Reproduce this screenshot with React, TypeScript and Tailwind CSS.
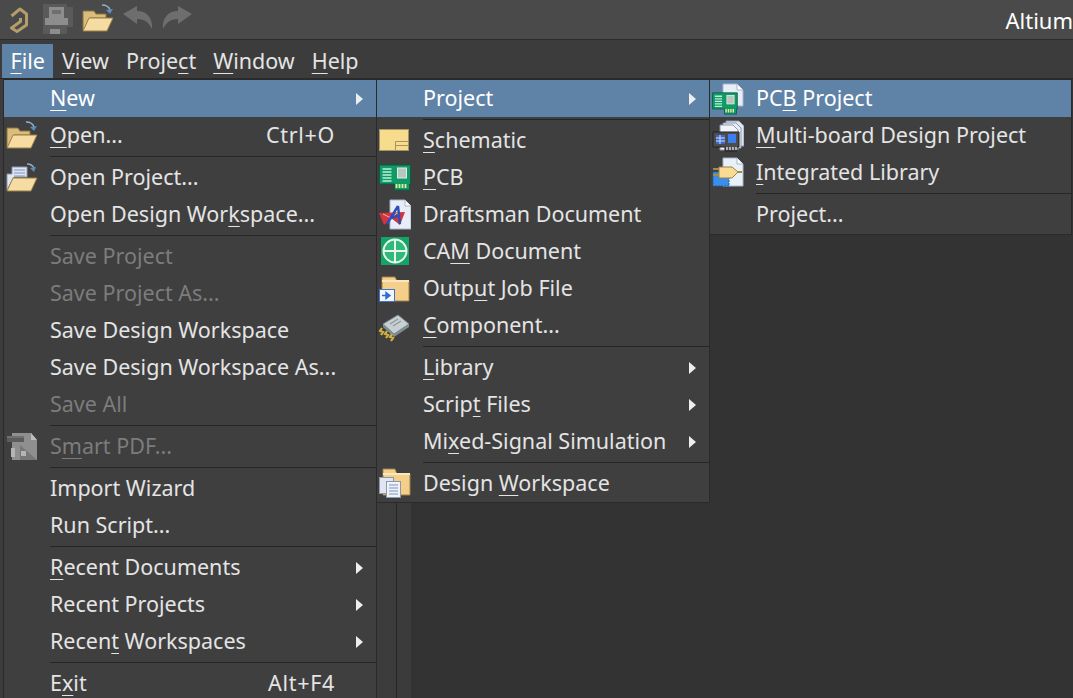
import type { ReactNode } from "react";

const Caption = ({ text }: { text: string }) => {
    // "&" marks the mnemonic letter, same as a native menu label
    const i = text.indexOf("&");
    if (i < 0) return <>{text}</>;
    return (
        <>
            {text.slice(0, i)}
            <span className="underline decoration-1 underline-offset-[4px]">{text[i + 1]}</span>
            {text.slice(i + 2)}
        </>
    );
};

const OpenFolder = () => (
    <svg width="32" height="32" viewBox="0 0 32 32">
        <path d="M1 27V8h11l2 3h10v4H8L3 27z" fill="#dcbc7c" stroke="#8b7440" strokeWidth="1" />
        <path d="M1 28l6-13h24l-6 13z" fill="#f6dca2" stroke="#9a7f45" strokeWidth="1" />
        <path d="M20 2c4 0 7 2 8 5" fill="none" stroke="#8fb0cc" strokeWidth="1.5" />
        <path d="M24 7l7-1-3 5z" fill="#5c8cb8" />
    </svg>
);

const OpenProjectIcon = () => (
    <svg width="32" height="32" viewBox="0 0 32 32">
        <path d="M1 28V12h5V5h15v10H8z" fill="#dfe6f2" stroke="#8d98ad" strokeWidth="1" />
        <path d="M8 8h11M8 11h11M8 14h11" stroke="#7f93bd" strokeWidth="1" />
        <path d="M1 29l6-13h24l-6 13z" fill="#f6dca2" stroke="#9a7f45" strokeWidth="1" />
        <path d="M21 2c4 0 6 2 7 4" fill="none" stroke="#8fb0cc" strokeWidth="1.5" />
        <path d="M24 6l6-1-2 5z" fill="#5c8cb8" />
    </svg>
);

const SmartPdf = () => (
    <svg width="32" height="32" viewBox="0 0 32 32">
        <path d="M6 2h19l6 7v20H6z" fill="#8f8f8f" />
        <path d="M25 2l6 7h-6z" fill="#bdbdbd" />
        <path d="M14 14l17 15H14z" fill="#777" />
        <path d="M1 5h17v6H1z" fill="#5c5c5c" />
        <path d="M1 5h17v2H1z" fill="#707070" />
        <path d="M5 17h4v9H5zM15 20h5v5h-5z" fill="#b5b5b5" />
    </svg>
);

const SchematicIcon = () => (
    <svg width="32" height="32" viewBox="0 0 32 32">
        <rect x="0.5" y="4.5" width="29" height="21" fill="#f7dc8e" stroke="#a59361" />
        <path d="M16.5 25V16.5H29.5M16.5 20.5H29.5" fill="none" stroke="#a59361" />
    </svg>
);

const PcbBoard = ({ x = 0, y = 0 }: { x?: number; y?: number }) => (
    <g transform={`translate(${x} ${y})`}>
        <path d="M0 1h31v19h-1v6H15v-6H0z" fill="#0f9a68" stroke="#0b5c40" strokeWidth="1" />
        <path d="M3 5h9M3 8h9M3 11h9M3 14h9M3 17h9" stroke="#bff0d8" strokeWidth="1.5" />
        <rect x="18" y="4" width="9" height="10" fill="#b7c6bf" stroke="#e3ebe6" />
        <path d="M17 20v4M20 20v4M23 20v4M26 20v4" stroke="#e6ec9a" strokeWidth="1.8" />
    </g>
);

const PcbIcon = () => (
    <svg width="32" height="32" viewBox="0 0 32 32">
        <PcbBoard x={0.5} y={2} />
    </svg>
);

const DraftsmanIcon = () => (
    <svg width="32" height="32" viewBox="0 0 32 32">
        <path d="M11 1h15l6 6v23H11z" fill="#e8eef8" stroke="#a9b4c8" />
        <path d="M26 1v6h6" fill="#fff" stroke="#a9b4c8" />
        <path d="M0 14l26-1-5 13-9-7-7 7z" fill="#d4333f" />
        <path d="M4 15l8 4 6-5 3 5" fill="none" stroke="#f0b0b0" strokeWidth="1" />
        <path d="M19 7L8 25M19 7l2 18M12 19l9-3" fill="none" stroke="#2b4fb8" strokeWidth="2.4" />
    </svg>
);

const CamIcon = () => (
    <svg width="32" height="32" viewBox="0 0 32 32">
        <rect x="2" y="1" width="28" height="28" fill="#14a566" />
        <circle cx="16" cy="15" r="11.5" fill="#2fb97b" stroke="#e8f6ee" strokeWidth="2" />
        <path d="M16 3v24M4 15h24" stroke="#e8f6ee" strokeWidth="2" />
    </svg>
);

const OutputIcon = () => (
    <svg width="32" height="32" viewBox="0 0 32 32">
        <path d="M3 26V4h13l2 4h12v20H3z" fill="#f5cf8a" stroke="#9d8149" />
        <path d="M3 8h27" stroke="#fbe7bd" strokeWidth="2" />
        <rect x="0.5" y="16.5" width="15" height="12" fill="#f3f6fc" stroke="#3a74cf" />
        <path d="M3 22.5h6M7 19.5l4 3-4 3z" fill="#2d6cd0" stroke="#2d6cd0" strokeWidth="1.4" />
    </svg>
);

const ComponentIcon = () => (
    <svg width="32" height="32" viewBox="0 0 32 32">
        <path d="M4 14L19 5l11 9-15 10z" fill="#c7cfd2" stroke="#7c8a8d" />
        <path d="M4 14v3l11 10 15-10v-3L15 24z" fill="#7f8e92" />
        <path d="M11 14l8-5M14 16l8-5" stroke="#8e9a9d" strokeWidth="1.4" />
        <path d="M3 18l-2 3 3 1-2 3M8 21l-2 3 3 1-2 3M13 24l-2 3 3 1-2 3" fill="none" stroke="#d6b23c" strokeWidth="2.2" />
    </svg>
);

const WorkspaceIcon = () => (
    <svg width="32" height="32" viewBox="0 0 32 32">
        <path d="M4 24V1h12l2 5h13v21H4z" fill="#f5cf8a" stroke="#9d8149" />
        <path d="M4 6h27" stroke="#fbe7bd" strokeWidth="2" />
        <rect x="0.5" y="9.5" width="14" height="16" fill="#dfe6f2" stroke="#8d98ad" />
        <rect x="7.5" y="13.5" width="14" height="16" fill="#eef2fa" stroke="#8d98ad" />
        <path d="M10 17h9M10 20h9M10 23h9M10 26h9" stroke="#7f93bd" />
    </svg>
);

const PageBack = () => (
    <>
        <path d="M11 1h14l6 6v16H11z" fill="#e8eef8" stroke="#a9b4c8" />
        <path d="M25 1v6h6" fill="#fff" stroke="#a9b4c8" />
    </>
);

const PcbProjectIcon = () => (
    <svg width="32" height="32" viewBox="0 0 32 32">
        <PageBack />
        <g transform="translate(0.5 9) scale(0.8 0.85)">
            <PcbBoard />
        </g>
    </svg>
);

const MultiBoardIcon = () => (
    <svg width="32" height="32" viewBox="0 0 32 32">
        <path d="M14 1h13l5 5v20H14z" fill="#dfe6f2" stroke="#8d98ad" />
        <path d="M11 3h13l5 5v20H11z" fill="#e8eef8" stroke="#8d98ad" />
        <path d="M8 5h13l5 5v20H8z" fill="#f0f4fb" stroke="#8d98ad" />
        <path d="M1 12h26v15h-2v4H13v-4H1z" fill="#4c4c4c" stroke="#222" />
        <path d="M4 15h9v9H4z" fill="#3f68c8" />
        <path d="M4 18h9M4 21h9M8 15v9" stroke="#cfe0ff" />
        <rect x="16" y="14" width="8" height="9" fill="#3c7df0" />
        <path d="M15 27v3M18 27v3M21 27v3M24 27v3" stroke="#ddd" strokeWidth="1.4" />
    </svg>
);

const LibraryIcon = () => (
    <svg width="32" height="32" viewBox="0 0 32 32">
        <path d="M11 1h14l6 6v22H11z" fill="#e8f0f8" stroke="#a9b4c8" />
        <path d="M25 1v6h6" fill="#fff" stroke="#a9b4c8" />
        <rect x="1" y="15" width="16" height="14" fill="#3b8fe8" stroke="#1f5fb0" strokeDasharray="2 1" />
        <path d="M7 10h13l6 5-6 6H7z" fill="#f8dc95" stroke="#9d8149" />
        <path d="M1 12h6M1 18h6M26 15h4" stroke="#a78c3b" strokeWidth="2" />
    </svg>
);

type Row =
    | { sep: true }
    | {
          sep?: false;
          label: string;
          icon?: ReactNode;
          keys?: string;
          more?: boolean;
          off?: boolean;
          hot?: boolean;
      };

const fileRows: Row[] = [
    { label: "&New", more: true, hot: true },
    { label: "&Open...", icon: <OpenFolder />, keys: "Ctrl+O" },
    { sep: true },
    { label: "Open Project...", icon: <OpenProjectIcon /> },
    { label: "Open Design Wor&kspace..." },
    { sep: true },
    { label: "Save Project", off: true },
    { label: "Save Project As...", off: true },
    { label: "Save Design Workspace" },
    { label: "Save Design Workspace As..." },
    { label: "Save All", off: true },
    { sep: true },
    { label: "S&mart PDF...", icon: <SmartPdf />, off: true },
    { sep: true },
    { label: "Import Wizard" },
    { label: "Run Script..." },
    { sep: true },
    { label: "&Recent Documents", more: true },
    { label: "Recent Projects", more: true },
    { label: "Recen&t Workspaces", more: true },
    { sep: true },
    { label: "E&xit", keys: "Alt+F4" },
];

const newRows: Row[] = [
    { label: "Project", more: true, hot: true },
    { sep: true },
    { label: "&Schematic", icon: <SchematicIcon /> },
    { label: "&PCB", icon: <PcbIcon /> },
    { label: "Draftsman Document", icon: <DraftsmanIcon /> },
    { label: "CA&M Document", icon: <CamIcon /> },
    { label: "Outp&ut Job File", icon: <OutputIcon /> },
    { label: "&Component...", icon: <ComponentIcon /> },
    { sep: true },
    { label: "&Library", more: true },
    { label: "Scrip&t Files", more: true },
    { label: "Mi&xed-Signal Simulation", more: true },
    { sep: true },
    { label: "Design &Workspace", icon: <WorkspaceIcon /> },
];

const projectRows: Row[] = [
    { label: "PC&B Project", icon: <PcbProjectIcon />, hot: true },
    { label: "&Multi-board Design Project", icon: <MultiBoardIcon /> },
    { label: "&Integrated Library", icon: <LibraryIcon /> },
    { sep: true },
    { label: "Project..." },
];

const Menu = ({ rows, className }: { rows: Row[]; className: string }) => (
    <div className={`absolute flex flex-col bg-[#3f3f3f] border border-[#2a2a2a] ${className}`}>
        {rows.map((row, i) =>
            row.sep ? (
                <div key={i} className="h-[5px] flex items-center pl-[46px]">
                    <div className="h-px w-full bg-[#262626]" />
                </div>
            ) : (
                <div
                    key={i}
                    className={`h-[37px] shrink-0 flex items-center ${row.hot ? "bg-[#5f83a7] text-white" : ""} ${
                        row.off ? "text-[#7c7c7c]" : ""
                    }`}
                >
                    <div className="w-[46px] shrink-0 pl-[2px] flex items-center">{row.icon}</div>
                    <span className="flex-1 whitespace-nowrap pb-[2px]">
                        <Caption text={row.label} />
                    </span>
                    {row.keys && <span className="mr-[41px] pb-[2px] tracking-[0.7px]">{row.keys}</span>}
                    {row.more && (
                        <svg width="7" height="12" viewBox="0 0 7 12" className="mr-[13px]">
                            <path d="M0 0l7 6-7 6z" fill="#eeeeee" />
                        </svg>
                    )}
                </div>
            ),
        )}
    </div>
);

const Toolbar = () => (
    <div className="h-10 shrink-0 flex items-center bg-[#4a4a4a] border-b border-[#2c2c2c] pl-[10px]">
        <svg width="18" height="26" viewBox="0 0 18 26" className="mr-[15px]">
            <path d="M1.5 9L10 2l6.5 5v11L7 24.5 1.5 21l9-6.5V11" fill="none" stroke="#b39d68" strokeWidth="3" strokeLinejoin="round" />
        </svg>
        <svg width="30" height="30" viewBox="0 0 30 30" className="mr-[9px] mb-[2px]">
            <path d="M0 0h24v3h6v20h-6v7H0z" fill="#5a5a5a" />
            <path d="M6 3h15v11H6zM2 14h23v7H2zM7 25h10v5H7z" fill="#8d8d8d" />
            <path d="M9 6h9v4H9z" fill="#6f6f6f" />
        </svg>
        <div className="mr-[9px] mb-[2px]">
            <OpenFolder />
        </div>
        <svg width="30" height="23" viewBox="0 0 30 23" className="mr-[9px] mb-[4px]">
            <path d="M0 8L14 0v5c10 0 16 7 15 18-3-6-7-10-15-10v5z" fill="#6e6e6e" />
        </svg>
        <svg width="30" height="23" viewBox="0 0 30 23" className="mb-[4px]">
            <path d="M30 8L16 0v5C6 5 0 12 1 23c3-6 7-10 15-10v5z" fill="#6e6e6e" />
        </svg>
        <span className="ml-auto text-[22px] text-white whitespace-nowrap">Altium</span>
    </div>
);

const MenuBar = () => (
    <div className="h-[39px] shrink-0 flex items-end bg-[#3c3c3c] pl-[2px] border-b border-[#2a2a2a]">
        {["&File", "&View", "Proje&ct", "&Window", "&Help"].map((m, i) => (
            <div key={m} className={`h-[34px] flex items-center px-[8.5px] ${i === 0 ? "bg-[#5f83a7] text-white" : ""}`}>
                <Caption text={m} />
            </div>
        ))}
    </div>
);

export default function App() {
    return (
        <div
            className="relative h-[698px] w-[1073px] overflow-hidden flex flex-col bg-[#333333] text-[21.5px] leading-none text-[#e4e4e4]"
            style={{ fontFamily: '"Noto Sans", sans-serif' }}
        >
            <Toolbar />
            <MenuBar />
            <div className="flex-1 flex">
                <div className="w-[397px] bg-[#3c3c3c] border-r border-[#262626]" />
                <div className="w-[14px] bg-[#3b3b3b]" />
                <div className="flex-1 bg-[#333333]" />
            </div>
            <Menu rows={fileRows} className="left-[3px] top-[79px] w-[374px]" />
            <Menu rows={newRows} className="left-[376px] top-[79px] w-[334px]" />
            <Menu rows={projectRows} className="left-[709px] top-[79px] w-[363px] pb-[1px]" />
        </div>
    );
}
